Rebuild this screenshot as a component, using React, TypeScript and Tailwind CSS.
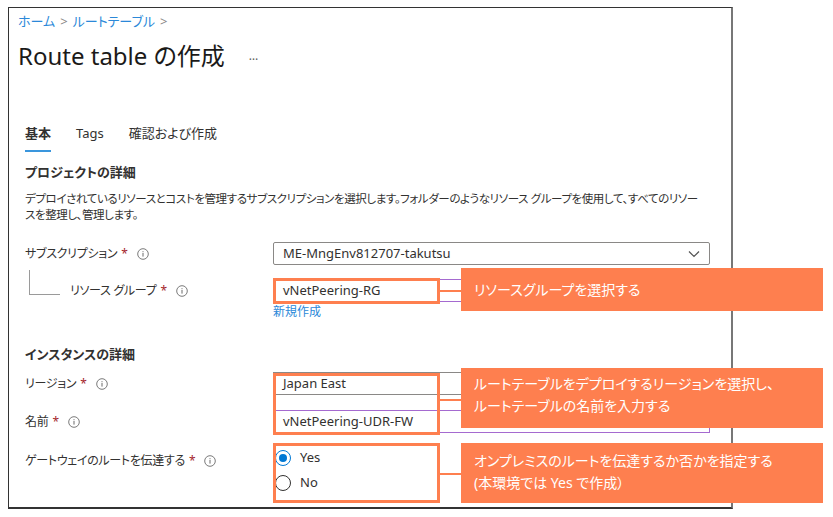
import React from "react"

const ORANGE = "bg-[#fe7f4f]"

function Info() {
  return (
    <svg width="12" height="12" viewBox="0 0 12 12" className="ml-[9px] shrink-0">
      <circle cx="6" cy="6" r="5.3" fill="none" stroke="#6b6b6b" strokeWidth="0.9" />
      <rect x="5.5" y="5" width="1" height="3.6" fill="#6b6b6b" />
      <rect x="5.5" y="3.2" width="1" height="1" fill="#6b6b6b" />
    </svg>
  )
}

function Label({ text }: { text: string }) {
  return (
    <div className="flex items-center text-[12px] leading-[16px] tracking-[-0.3px] text-[#323130]">
      <span>{text}</span>
      <span className="ml-[4px] text-[#a4262c]">*</span>
      <Info />
    </div>
  )
}

function Row({
  label,
  children,
  className = "",
}: {
  label: React.ReactNode
  children: React.ReactNode
  className?: string
}) {
  return (
    <div className={`flex ${className}`}>
      <div className="relative w-[248px] shrink-0">{label}</div>
      <div className="w-[437px]">{children}</div>
    </div>
  )
}

export default function App() {
  return (
    <div
      className="relative h-[517px] w-[833px] overflow-hidden bg-white text-[#323130] [font-feature-settings:'palt']"
      style={{ fontFamily: '"Noto Sans", "Noto Sans CJK JP", sans-serif' }}
    >
      {/* screenshot frame */}
      <div className="ml-[8px] mt-[7px] h-[502px] w-[725px] border-b-2 border-l border-r-2 border-t border-b-[#333] border-l-[#333] border-r-[#777] border-t-[#333]">
        <div className="pl-[9px] pt-[5px]">
          <div className="flex h-[18px] items-center text-[13px] text-[#2b88d8]">
            <span>ホーム</span>
            <span className="mx-[5px] text-[#8a8886]">&gt;</span>
            <span>ルートテーブル</span>
            <span className="mx-[5px] text-[#8a8886]">&gt;</span>
          </div>
          <div className="mt-[9px] flex h-[32px] items-center">
            <span className="text-[24px] leading-[32px] text-[#1b1a19]">Route table の作成</span>
            <span className="ml-[24px] text-[12px] text-[#605e5c]">…</span>
          </div>
        </div>

        <div className="pl-[16px]">
          {/* tabs */}
          <div className="mt-[51px] flex gap-[25px] text-[13px] leading-[20px]">
            <div className="h-[29px] border-b-2 border-[#3a96dd] pb-[7px] font-semibold">基本</div>
            <div>Tags</div>
            <div>確認および作成</div>
          </div>

          <div className="mt-[11px] h-[18px] text-[13px] font-bold leading-[18px]">プロジェクトの詳細</div>
          <div className="mt-[10px] whitespace-nowrap text-[11.5px] leading-[16px] tracking-[-0.4px]">
            デプロイされているリソースとコストを管理するサブスクリプションを選択します。フォルダーのようなリソース グループを使用して、すべてのリソー
            <br />
            スを整理し、管理します。
          </div>

          <Row className="mt-[19px] items-center" label={<Label text="サブスクリプション" />}>
            <div className="flex h-[23px] items-center justify-between rounded-[2px] border border-[#8a8886] pl-[9px] pr-[9px] text-[13px]">
              <span>ME-MngEnv812707-takutsu</span>
              <svg width="12" height="8" viewBox="0 0 12 8">
                <path d="M1 1.5 L6 6.5 L11 1.5" fill="none" stroke="#555" strokeWidth="1.2" />
              </svg>
            </div>
          </Row>

          <Row
            className="mt-[14px] items-center"
            label={
              <>
                <div className="absolute left-[4px] top-[-13px] h-[25px] w-[31px] border-b border-l border-[#9a9a9a]" />
                <div className="pl-[45px]">
                  <Label text="リソース グループ" />
                </div>
              </>
            }
          >
            <div className="flex h-[23px] items-center border border-[#a56ad0] pl-[9px] text-[13px]">vNetPeering-RG</div>
          </Row>
          <Row className="mt-[2px]" label={null}>
            <div className="h-[16px] text-[12px] leading-[16px] text-[#2b88d8]">新規作成</div>
          </Row>

          <div className="mt-[25px] h-[18px] text-[13px] font-bold leading-[18px]">インスタンスの詳細</div>

          <Row className="mt-[9px] items-center" label={<Label text="リージョン" />}>
            <div className="flex h-[23px] items-center border border-[#8a8886] pl-[9px] text-[13px]">Japan East</div>
          </Row>
          <Row className="mt-[15px] items-center" label={<Label text="名前" />}>
            <div className="flex h-[23px] items-center border border-[#a56ad0] pl-[9px] text-[13px]">vNetPeering-UDR-FW</div>
          </Row>

          <Row className="mt-[15px]" label={<div className="pt-[5px]"><Label text="ゲートウェイのルートを伝達する" /></div>}>
            <div className="flex flex-col gap-[5px] pl-[2px] text-[13px]">
              <div className="flex h-[20px] items-center">
                <span className="flex h-[16px] w-[16px] items-center justify-center rounded-full border border-[#0078d4]">
                  <span className="h-[8px] w-[8px] rounded-full bg-[#0078d4]" />
                </span>
                <span className="ml-[9px]">Yes</span>
              </div>
              <div className="flex h-[20px] items-center">
                <span className="h-[16px] w-[16px] rounded-full border border-[#323130]" />
                <span className="ml-[9px]">No</span>
              </div>
            </div>
          </Row>
        </div>
      </div>

      {/* annotations */}
      <div className="absolute left-[273px] top-[278px] h-[26px] w-[167px] border-[3px] border-[#fe7f4f]" />
      <div className="absolute left-[273px] top-[373px] h-[62px] w-[167px] border-[3px] border-[#fe7f4f]" />
      <div className="absolute left-[273px] top-[443px] h-[60px] w-[167px] border-[3px] border-[#fe7f4f]" />

      <div className={`absolute left-[440px] top-[290px] h-[2px] w-[22px] ${ORANGE}`} />
      <div className={`absolute left-[440px] top-[399px] h-[2px] w-[22px] ${ORANGE}`} />
      <div className={`absolute left-[440px] top-[473px] h-[2px] w-[22px] ${ORANGE}`} />

      <div className={`absolute left-[461px] top-[268px] flex h-[43px] w-[362px] items-center pl-[13px] text-[14px] text-white ${ORANGE}`}>
        リソースグループを選択する
      </div>
      <div className={`absolute left-[461px] top-[368px] h-[60px] w-[362px] pl-[13px] pt-[5px] text-[14px] leading-[22px] text-white ${ORANGE}`}>
        ルートテーブルをデプロイするリージョンを選択し、
        <br />
        ルートテーブルの名前を入力する
      </div>
      <div className={`absolute left-[461px] top-[443px] h-[60px] w-[362px] pl-[13px] pt-[7px] text-[14px] leading-[22px] text-white ${ORANGE}`}>
        オンプレミスのルートを伝達するか否かを指定する
        <br />
        (本環境では Yes で作成）
      </div>
    </div>
  )
}
